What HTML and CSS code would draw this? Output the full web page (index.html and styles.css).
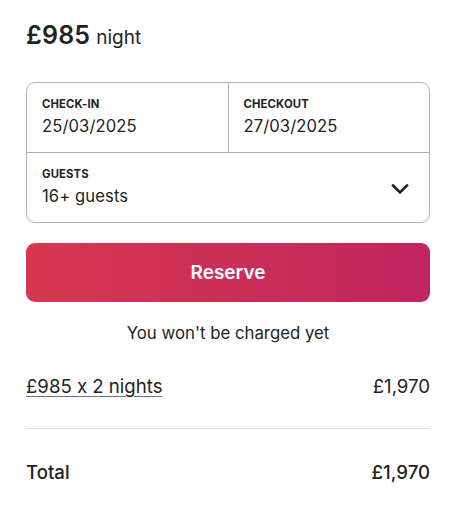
FILE: index.html
```html
<!DOCTYPE html>
<html>
<head>
<meta charset="utf-8">
<link rel="stylesheet" href="styles.css">
</head>
<body>
<div class="card">
  <div class="price"><span class="amount">£985</span> <span class="per">night</span></div>
  <div class="picker">
    <div class="dates">
      <div class="field">
        <div class="label">CHECK-IN</div>
        <div class="value">25/03/2025</div>
      </div>
      <div class="field field-right">
        <div class="label">CHECKOUT</div>
        <div class="value">27/03/2025</div>
      </div>
    </div>
    <div class="guests">
      <div class="field">
        <div class="label">GUESTS</div>
        <div class="value">16+ guests</div>
      </div>
      <svg class="chevron" width="18" height="12" viewBox="0 0 18 12"><path d="M2 2.5 L9 9.5 L16 2.5" fill="none" stroke="#222" stroke-width="2.6" stroke-linecap="square"/></svg>
    </div>
  </div>
  <button class="reserve">Reserve</button>
  <div class="note">You won't be charged yet</div>
  <div class="row"><span class="link">£985 x 2 nights</span><span>£1,970</span></div>
  <div class="divider"></div>
  <div class="row total"><span>Total</span><span>£1,970</span></div>
</div>
</body>
</html>
```
FILE: styles.css
```css
html, body { margin: 0; padding: 0; background: #fff; }
body { font-family: Inter, "Noto Sans", sans-serif; color: #222; font-feature-settings: "calt" 0; }
.card { padding: 20px 24px 0 26px; }
.price { display: flex; align-items: baseline; gap: 6px; height: 32px; }
.amount { font-size: 25px; font-weight: 600; letter-spacing: 0.2px; }
.per { font-size: 19px; font-weight: 400; }
.picker { margin-top: 30px; border: 1px solid #b0b0b0; border-radius: 9px; }
.dates { display: flex; height: 69px; border-bottom: 1px solid #b0b0b0; }
.dates .field { flex: 1; }
.field { padding: 14px 15px 0 15px; box-sizing: border-box; }
.field-right { border-left: 1px solid #b0b0b0; }
.label { font-size: 11.3px; font-weight: 700; letter-spacing: 0.15px; line-height: 15px; }
.value { font-size: 16.6px; margin-top: 4px; line-height: 20px; letter-spacing: 0.1px; }
.guests { display: flex; height: 69px; justify-content: space-between; align-items: center; }
.guests .field { align-self: flex-start; }
.chevron { margin-right: 20px; margin-top: 2px; }
.reserve { display: block; width: 100%; margin-top: 20px; height: 59px; border: none; border-radius: 9px; background: linear-gradient(to right, #d6384f, #c1255f); color: #fff; font-family: inherit; font-size: 19px; font-weight: 600; }
.note { text-align: center; font-size: 16.8px; margin-top: 21px; line-height: 20px; }
.row { display: flex; justify-content: space-between; font-size: 18.6px; line-height: 22px; }
.note + .row { margin-top: 32px; }
.link { text-decoration: underline; text-decoration-color: #717171; text-underline-offset: 3px; }
.divider { height: 1px; background: #ddd; margin-top: 31px; }
.total { margin-top: 32px; font-weight: 500; }
```
